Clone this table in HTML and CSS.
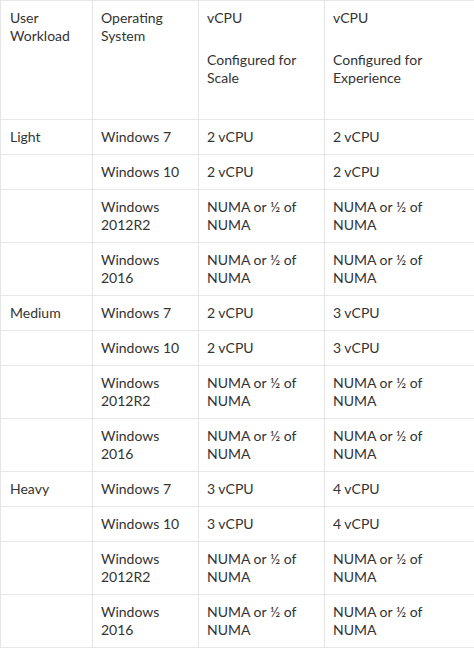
FILE: index.html
```html
<!DOCTYPE html>
<html>
<head>
<meta charset="utf-8">
<link rel="stylesheet" href="styles.css">
</head>
<body>
<table class="spec">
<colgroup>
<col class="c1"><col class="c2"><col class="c3"><col class="c4">
</colgroup>
<tbody>
<tr class="head">
<td><p>User Workload</p></td>
<td><p>Operating System</p></td>
<td><p>vCPU</p><p>Configured for Scale</p></td>
<td><p>vCPU</p><p>Configured for Experience</p></td>
</tr>
<tr><td>Light</td><td>Windows 7</td><td>2 vCPU</td><td>2 vCPU</td></tr>
<tr><td></td><td>Windows 10</td><td>2 vCPU</td><td>2 vCPU</td></tr>
<tr><td></td><td>Windows 2012R2</td><td>NUMA or ½ of NUMA</td><td>NUMA or ½ of NUMA</td></tr>
<tr><td></td><td>Windows 2016</td><td>NUMA or ½ of NUMA</td><td>NUMA or ½ of NUMA</td></tr>
<tr><td>Medium</td><td>Windows 7</td><td>2 vCPU</td><td>3 vCPU</td></tr>
<tr><td></td><td>Windows 10</td><td>2 vCPU</td><td>3 vCPU</td></tr>
<tr><td></td><td>Windows 2012R2</td><td>NUMA or ½ of NUMA</td><td>NUMA or ½ of NUMA</td></tr>
<tr><td></td><td>Windows 2016</td><td>NUMA or ½ of NUMA</td><td>NUMA or ½ of NUMA</td></tr>
<tr><td>Heavy</td><td>Windows 7</td><td>3 vCPU</td><td>4 vCPU</td></tr>
<tr><td></td><td>Windows 10</td><td>3 vCPU</td><td>4 vCPU</td></tr>
<tr><td></td><td>Windows 2012R2</td><td>NUMA or ½ of NUMA</td><td>NUMA or ½ of NUMA</td></tr>
<tr><td></td><td>Windows 2016</td><td>NUMA or ½ of NUMA</td><td>NUMA or ½ of NUMA</td></tr>
</tbody>
</table>
</body>
</html>
```
FILE: styles.css
```css
html, body {
  margin: 0;
  padding: 0;
  background: #ffffff;
}
body {
  font-family: Lato, "Open Sans", sans-serif;
  font-size: 14px;
  line-height: 18px;
  color: #333333;
}
.spec {
  width: 474px;
  table-layout: fixed;
  border-collapse: collapse;
}
.c1 { width: 92px; }
.c2 { width: 106px; }
.c3 { width: 126px; }
.c4 { width: 150px; }
.spec td {
  border: 1px solid #e6e6e6;
  padding: 8px 8px 8px 8px;
  vertical-align: top;
  text-align: left;
}
.spec td:first-child {
  padding-left: 9px;
}
.spec p {
  margin: 0 0 24px 0;
}
```
